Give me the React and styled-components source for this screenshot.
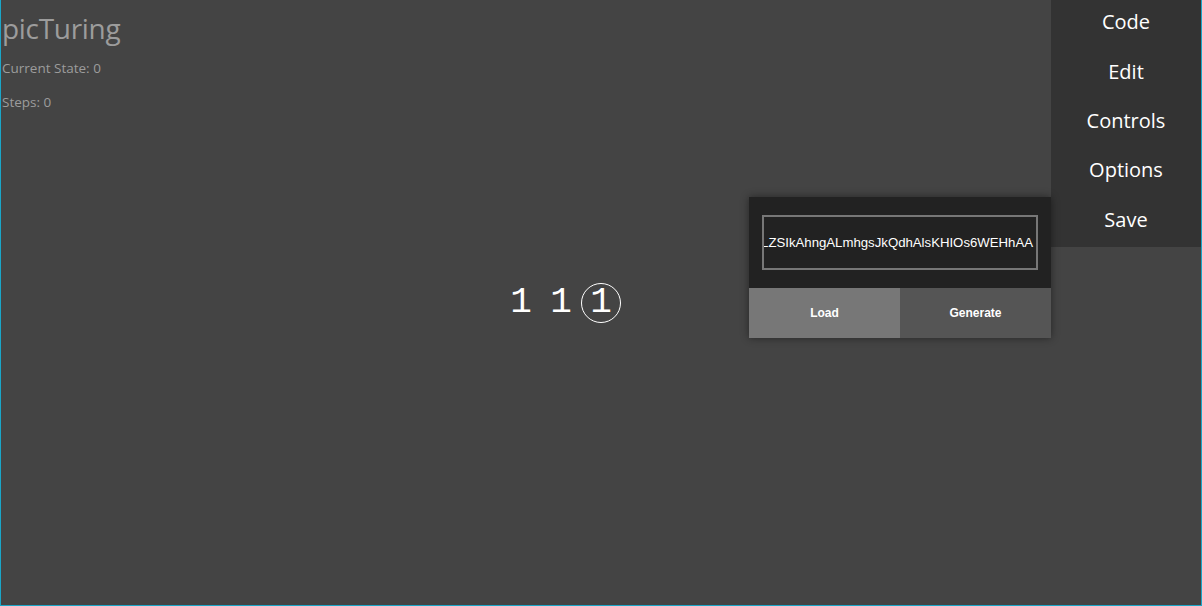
import React from "react";
import styled, { createGlobalStyle } from "styled-components";

const GlobalStyle = createGlobalStyle`
  html, body {
    margin: 0;
    padding: 0;
    height: 100%;
    background: #444444;
    overflow: hidden;
  }
  #root {
    height: 100%;
  }
`;

const tape = ["1", "1", "1", "", ""];
const headIndex = 2;
const code = "N4IgTgpgzgBgXCAJIoMSmBcoEQLZSIkAhngALmhgsJkQdhAlsKHIOs6WEHhAA";

const menuItems = ["Code", "Edit", "Controls", "Options", "Save"];

// Page
const Page = styled.div`
  box-sizing: border-box;
  height: 100vh;
  border: 1px solid #1aa6c8;
  border-top: none;
  display: grid;
  grid-template-columns: 1fr 150px;
  grid-template-rows: 100%;
  font-family: "Open Sans", "Noto Sans", sans-serif;
`;

const Layer = styled.div`
  grid-row: 1;
  grid-column: ${(p) => p.$col};
  display: flex;
  flex-direction: column;
  align-items: ${(p) => p.$align || "stretch"};
  justify-content: ${(p) => p.$justify || "flex-start"};
  min-width: 0;
`;

// Header
const Header = styled.header`
  display: flex;
  flex-direction: column;
  color: #9c9c9c;
  padding-left: 1px;
`;

const Title = styled.h1`
  margin: 0;
  padding-top: 8px;
  font-size: 28px;
  font-weight: 400;
  line-height: 40px;
  letter-spacing: -0.3px;
`;

const Stat = styled.div`
  font-size: 13.5px;
  line-height: 18px;
  margin-top: ${(p) => p.$gap}px;
`;

// Tape
const Tape = styled.div`
  display: flex;
  margin-top: 1px;
`;

const Cell = styled.div`
  position: relative;
  width: 40px;
  height: 40px;
  display: flex;
  align-items: center;
  justify-content: center;
  color: #ffffff;
  font-family: "Liberation Mono", "DejaVu Sans Mono", monospace;
  font-size: 36px;
  line-height: 40px;

  ${(p) =>
    p.$head &&
    `
    &::after {
      content: "";
      position: absolute;
      inset: 0;
      border: 1px solid #ffffff;
      border-radius: 50%;
    }
  `}
`;

// Menu
const Menu = styled.nav`
  background: #333333;
  display: flex;
  flex-direction: column;
`;

const MenuItem = styled.div`
  position: relative;
  height: 49.4px;
  display: flex;
  align-items: center;
  justify-content: center;
  padding-bottom: 6px;
  box-sizing: border-box;
  color: #ffffff;
  font-size: 20px;
`;

// Save popup
const Popup = styled.div`
  position: absolute;
  top: -0.6px;
  right: 100%;
  width: 302px;
  display: flex;
  flex-direction: column;
  box-shadow: 0 0 8px rgba(0, 0, 0, 0.45);
  font-family: "Liberation Sans", Arial, sans-serif;
`;

const PopupBody = styled.div`
  background: #222222;
  padding: 18px 13px;
`;

const CodeField = styled.div`
  box-sizing: border-box;
  height: 55px;
  border: 2px solid #777777;
  display: flex;
  align-items: center;
  justify-content: flex-end;
  overflow: hidden;
  white-space: nowrap;
  padding-right: 3px;
  color: #ffffff;
  font-size: 13.2px;
`;

const ButtonRow = styled.div`
  display: grid;
  grid-template-columns: 151px 151px;
`;

const Button = styled.button`
  height: 50px;
  border: none;
  margin: 0;
  background: ${(p) => p.$bg};
  color: #ffffff;
  font-family: inherit;
  font-size: 12px;
  font-weight: 700;
`;

export default function App() {
  return (
    <>
      <GlobalStyle />
      <Page>
        <Layer $col="1">
          <Header>
            <Title>picTuring</Title>
            <Stat $gap={11}>Current State: 0</Stat>
            <Stat $gap={16}>Steps: 0</Stat>
          </Header>
        </Layer>
        <Layer $col="1 / 3" $align="center" $justify="center">
          <Tape>
            {tape.map((c, i) => (
              <Cell key={i} $head={i === headIndex}>
                {c}
              </Cell>
            ))}
          </Tape>
        </Layer>
        <Layer $col="2">
          <Menu>
            {menuItems.map((item) => (
              <MenuItem key={item}>
                {item}
                {item === "Save" && (
                  <Popup>
                    <PopupBody>
                      <CodeField>
                        <span>{code}</span>
                      </CodeField>
                    </PopupBody>
                    <ButtonRow>
                      <Button $bg="#777777">Load</Button>
                      <Button $bg="#555555">Generate</Button>
                    </ButtonRow>
                  </Popup>
                )}
              </MenuItem>
            ))}
          </Menu>
        </Layer>
      </Page>
    </>
  );
}
